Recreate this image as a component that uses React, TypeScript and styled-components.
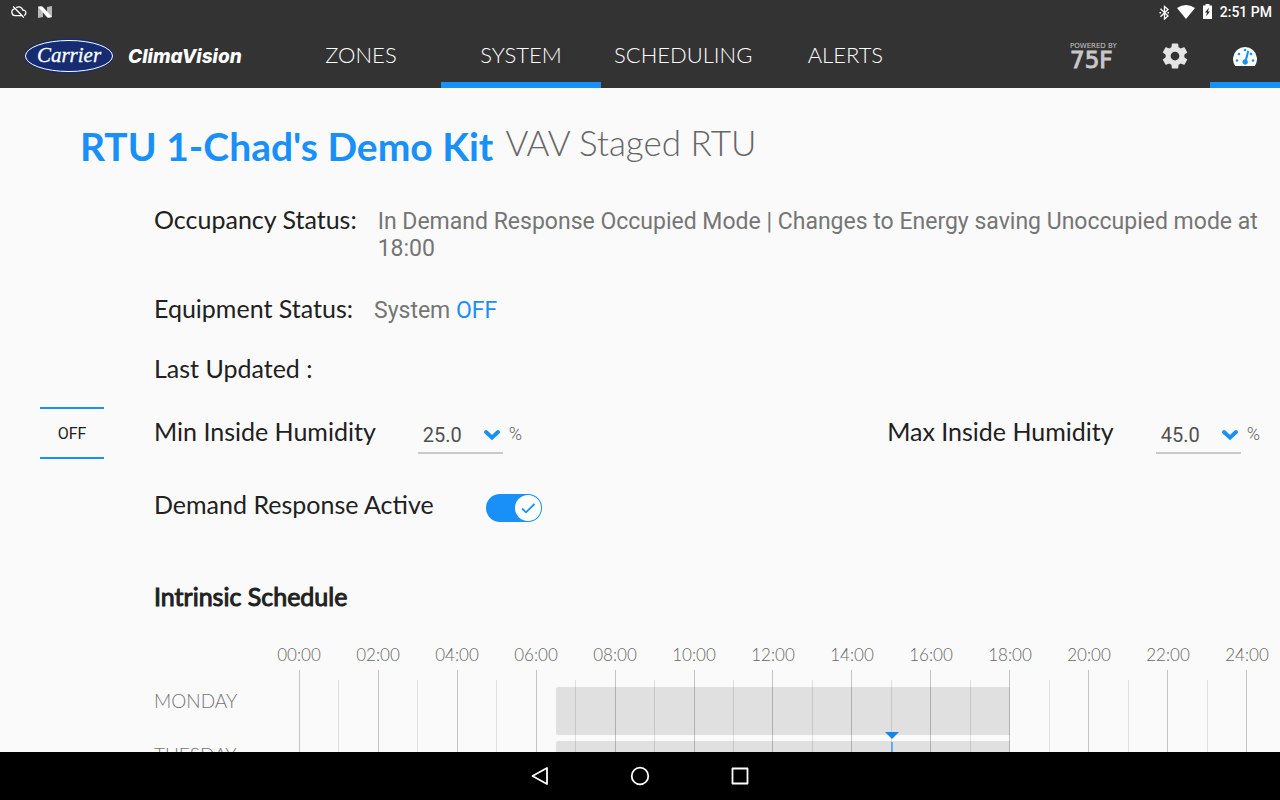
import React from "react";
import styled, { createGlobalStyle } from "styled-components";

const blue = "#1990f8";
const dark = "#333333";
const lato = 'Lato, "Open Sans", sans-serif';
const roboto = 'Roboto, "Noto Sans", sans-serif';

const GlobalStyle = createGlobalStyle`
  *, *::before, *::after { box-sizing: border-box; }
  body { margin: 0; background: #fafafa; font-family: ${lato}; color: #212121; }
  button, select { font: inherit; color: inherit; border: 0; background: none; padding: 0; margin: 0; }
  h1, h2, p { margin: 0; font-weight: 400; }
  svg { display: block; }
`;

const Screen = styled.div`
  display: flex;
  flex-direction: column;
  height: 100vh;
  overflow: hidden;
`;

const StatusBar = styled.div`
  display: flex;
  align-items: center;
  justify-content: space-between;
  height: 24px;
  padding: 0 8px 0 10px;
  background: ${dark};
  color: #fff;
  flex: none;
`;

const StatusGroup = styled.div<{ $gap: number }>`
  display: flex;
  align-items: center;
  gap: ${(p) => p.$gap}px;
`;

const Clock = styled.time`
  font: 500 14px/24px ${roboto};
`;

const Header = styled.header`
  display: flex;
  height: 64px;
  background: ${dark};
  color: #fff;
  flex: none;
`;

const Brand = styled.div`
  display: flex;
  align-items: center;
  gap: 14px;
  width: 281px;
  padding-left: 24px;
`;

const Product = styled.span`
  padding-top: 2px;
  font: italic 800 19px/24px Inter, ${roboto};
  font-feature-settings: "cv11";
`;

const Tabs = styled.nav`
  display: flex;
  flex: 1;
`;

const Tab = styled.button<{ $active?: boolean }>`
  min-width: 160px;
  padding: 4px 13px 0;
  border-bottom: 6px solid ${(p) => (p.$active ? blue : "transparent")};
  font-size: 22px;
  line-height: 28px;
  font-weight: 300;
`;

const Powered = styled.div`
  display: flex;
  flex-direction: column;
  justify-content: center;
  width: 70px;
  color: #c8c8c8;
`;

const PoweredBy = styled.span`
  font: 7px/8px "DejaVu Sans", sans-serif;
`;

const PoweredName = styled.span`
  font: 23px/20px "DejaVu Sans", sans-serif;
  -webkit-text-stroke: 1px currentColor;
`;

const IconTab = styled.button<{ $active?: boolean }>`
  display: flex;
  align-items: center;
  justify-content: center;
  width: 70px;
  padding-top: 6px;
  border-bottom: 6px solid ${(p) => (p.$active ? blue : "transparent")};
`;

const Main = styled.main`
  flex: 1;
  min-height: 0;
  overflow: hidden;
  padding-top: 34px;
`;

const TitleRow = styled.div`
  display: flex;
  gap: 12px;
  padding-left: 80px;
`;

const Title = styled.h1`
  font-size: 39px;
  line-height: 48px;
  font-weight: 700;
  color: ${blue};
`;

const Subtitle = styled.p`
  font-size: 35px;
  line-height: 40px;
  font-weight: 300;
  color: #666;
`;

const Row = styled.section<{ $top: number }>`
  display: grid;
  grid-template-columns: 114px 1fr;
  padding: 0 20px 0 40px;
  margin-top: ${(p) => p.$top}px;
`;

const RowBody = styled.div`
  grid-column: 2;
  display: flex;
  gap: 21px;
  margin-right: -12px;
`;

const Label = styled.span`
  font-size: 25px;
  line-height: 32px;
  white-space: nowrap;
`;

const Value = styled.p`
  padding-top: 5px;
  font: 23px/27px ${roboto};
  color: #757575;
`;

const Accent = styled.span`
  color: ${blue};
`;

const HumidityRow = styled(Row)`
  align-items: center;
`;

const ProfilePicker = styled.select`
  appearance: none;
  width: 64px;
  height: 52px;
  padding-top: 2px;
  border-top: 2px solid ${blue};
  border-bottom: 2px solid ${blue};
  font: 16px/20px ${roboto};
  text-align: center;
  text-align-last: center;
`;

const HumidityFields = styled.div`
  display: flex;
  justify-content: space-between;
`;

const Field = styled.label`
  display: flex;
  gap: 42px;
  padding-top: 2px;
`;

const FieldControl = styled.span`
  display: flex;
  gap: 6px;
`;

const SelectBox = styled.span`
  display: grid;
  grid-template-columns: 1fr 20px;
  align-items: center;
  width: 85px;
  height: 39px;
  border-bottom: 2px solid #c9c9c9;

  svg { grid-area: 1 / 2; pointer-events: none; margin-top: 3px; }
`;

const Select = styled.select`
  grid-area: 1 / 1 / 2 / 3;
  appearance: none;
  width: 100%;
  height: 37px;
  padding: 3px 5px 0;
  font: 20px/24px ${roboto};
  color: #505050;
`;

const Unit = styled.span`
  font: 300 18px/38px ${roboto};
  color: #666;
`;

const Toggle = styled.label`
  display: flex;
  gap: 52px;
`;

const Switch = styled.span`
  display: grid;
  margin-top: 6px;

  input { grid-area: 1 / 1; width: 56px; height: 28px; margin: 0; opacity: 0; }
  svg { grid-area: 1 / 1; }
`;

const SectionTitle = styled.h2`
  padding-left: 154px;
  margin-top: 58px;
  font-size: 25px;
  line-height: 32px;
  -webkit-text-stroke: 1px currentColor;
`;

const Schedule = styled.div`
  display: grid;
  grid-template-columns: 145px 1fr;
  padding: 33px 33px 0 154px;
`;

const HourLabels = styled.div`
  grid-column: 2;
  display: grid;
  grid-template-columns: repeat(12, 1fr) 0;
  height: 25px;
`;

const HourLabel = styled.span`
  display: flex;
  justify-content: center;
  width: 0;
  font-size: 17px;
  line-height: 20px;
  font-weight: 300;
  color: #666;
`;

const Days = styled.div`
  padding-top: 17px;
`;

const Day = styled.div`
  height: 54px;
  font-size: 19px;
  line-height: 28px;
  font-weight: 300;
  color: #757575;
`;

const Chart = styled.div`
  display: grid;
`;

const HourLines = styled.div`
  grid-area: 1 / 1;
  display: grid;
  grid-template-columns: repeat(24, 1fr) 1px;
  z-index: 1;
`;

const HourLine = styled.i<{ $major: boolean }>`
  width: 1px;
  margin-top: ${(p) => (p.$major ? 0 : 10)}px;
  background: rgba(0, 0, 0, ${(p) => (p.$major ? 0.22 : 0.11)});
`;

const DayTracks = styled.div`
  grid-area: 1 / 1;
  display: flex;
  flex-direction: column;
  gap: 6px;
  padding-top: 17px;
`;

const Track = styled.div`
  position: relative;
  display: grid;
  grid-template-columns: repeat(48, 1fr);
  height: 48px;
`;

const Occupied = styled.div`
  grid-area: 1 / 14 / 2 / 37;
  border-radius: 2px 0 0 2px;
  background: #e0e0e0;
`;

const NowMarker = styled.div`
  position: absolute;
  top: -9px;
  left: 62.5%;
  width: 14px;
  margin-left: -7px;
  z-index: 2;
`;

const NavBar = styled.footer`
  display: flex;
  align-items: center;
  justify-content: center;
  gap: 76px;
  height: 48px;
  background: #000;
  flex: none;
`;

const hours = Array.from({ length: 25 }, (_, h) => h);
const days = ["MONDAY", "TUESDAY"];

function CarrierLogo() {
  return (
    <svg width="90" height="36" viewBox="0 0 90 36" role="img" aria-label="Carrier">
      <ellipse cx="45" cy="18" rx="44.5" ry="17.5" fill="#152c73" />
      <ellipse cx="45" cy="18" rx="43.5" ry="15.5" fill="none" stroke="#fff" strokeWidth="1" />
      <text x="45" y="24" fill="#fff" stroke="#fff" strokeWidth="0.3" textAnchor="middle" fontFamily="Liberation Serif, serif" fontStyle="italic" fontSize="21">
        Carrier
      </text>
    </svg>
  );
}

function Chevron() {
  return (
    <svg width="18" height="12" viewBox="0 0 18 12" fill="none" stroke={blue} strokeWidth="4" strokeLinecap="round" strokeLinejoin="miter">
      <path d="M3 3 L9 8.6 L15 3" />
    </svg>
  );
}

function HumidityField({ label, value }: { label: string; value: string }) {
  return (
    <Field>
      <Label>{label}</Label>
      <FieldControl>
        <SelectBox>
          <Select defaultValue={value}>
            <option>{value}</option>
          </Select>
          <Chevron />
        </SelectBox>
        <Unit>%</Unit>
      </FieldControl>
    </Field>
  );
}

export default function App() {
  return (
    <Screen>
      <GlobalStyle />
      <StatusBar>
        <StatusGroup $gap={10}>
          <svg width="18" height="14" viewBox="0 0 18 14" fill="none" stroke="#fff" strokeWidth="1.3">
            <path d="M6.2 2.6 C9 .8 12 2.3 12.8 5 C15.500 5 16.300 7 15.700 8.800 C15.400 9.700 14.800 10.200 14 10.500 M4.800 3.800 C2.500 4.100 1.600 5.800 1.900 7.600 C2.200 9.600 3.500 10.600 5 10.600 H11.500 M3.200 1.500 L13.800 12.500" />
          </svg>
          <svg width="14" height="12" viewBox="0 0 14 12">
            <path d="M0 .5 L5 4 V11 L0 12 Z M14 0 L9 1 V8 L14 11 Z" fill="#b8b8b8" />
            <path d="M0 .8 Q2 -.3 4.500 .5 L14 11 Q11 12.500 9 11.300 Z" fill="#fff" />
          </svg>
        </StatusGroup>
        <StatusGroup $gap={8}>
          <svg width="10" height="15" viewBox="0 0 10 15" fill="none" stroke="#fff" strokeWidth="1.3">
            <path d="M1.500 3.700 L9 11 L5.500 14 V1.500 L9 4.500 L1.500 11.700" />
            <path d="M.5 7.700 h1.600 M8.400 7.700 h1.600" strokeWidth="1.600" />
          </svg>
          <svg width="18" height="14" viewBox="0 0 18 14">
            <path d="M0 3 Q9 -3 18 3 L9 14 Z" fill="#fff" />
          </svg>
          <svg width="9" height="17" viewBox="0 0 9 17">
            <path d="M0 1.500 H2.500 V0 H6.500 V1.500 H9 V15 H0 Z" fill="#fff" />
            <path d="M6 3.500 L2 8.500 H4 L3 12.500 L7 7.500 H5 Z" fill={dark} />
          </svg>
          <Clock>2:51 PM</Clock>
        </StatusGroup>
      </StatusBar>

      <Header>
        <Brand>
          <CarrierLogo />
          <Product>ClimaVision</Product>
        </Brand>
        <Tabs>
          <Tab>ZONES</Tab>
          <Tab $active>SYSTEM</Tab>
          <Tab>SCHEDULING</Tab>
          <Tab>ALERTS</Tab>
        </Tabs>
        <Powered>
          <PoweredBy>POWERED BY</PoweredBy>
          <PoweredName>75F</PoweredName>
        </Powered>
        <IconTab aria-label="Settings">
          <svg width="30" height="30" viewBox="0 0 24 24" fill="#e4e4e4">
            <path d="M19.430 12.980c.040-.320.070-.640.070-.980s-.030-.660-.070-.980l2.110-1.650c.190-.150.240-.420.120-.640l-2-3.460c-.120-.220-.390-.300-.610-.220l-2.490 1c-.520-.400-1.080-.730-1.690-.980l-.380-2.650C14.460 2.180 14.250 2 14 2h-4c-.250 0-.460.180-.490.420l-.380 2.650c-.610.250-1.170.590-1.690.980l-2.490-1c-.230-.090-.490 0-.610.220l-2 3.460c-.130.220-.070.490.120.640l2.110 1.650c-.040.320-.070.650-.070.980s.030.660.070.980l-2.110 1.650c-.190.150-.240.420-.120.640l2 3.460c.120.220.390.300.610.220l2.490-1c.520.400 1.080.730 1.690.980l.380 2.650c.030.240.240.420.490.420h4c.250 0 .460-.180.490-.420l.380-2.650c.610-.250 1.170-.590 1.690-.980l2.490 1c.230.090.490 0 .610-.220l2-3.460c.120-.220.070-.490-.120-.640l-2.110-1.650zM12 15.500c-1.930 0-3.500-1.570-3.500-3.500s1.570-3.500 3.500-3.500 3.500 1.570 3.500 3.500-1.570 3.500-3.500 3.500z" />
          </svg>
        </IconTab>
        <IconTab $active aria-label="Dashboard">
          <svg width="24" height="20" viewBox="0 0 24 20">
            <path d="M2.200 20 A12 12 0 1 1 21.800 20 Z" fill="#fff" />
            <g fill={blue}>
              <circle cx="4" cy="14.500" r="1.300" />
              <circle cx="6" cy="8" r="1.300" />
              <circle cx="12" cy="4" r="1.300" />
              <circle cx="18" cy="8" r="1.300" />
              <circle cx="20" cy="14.500" r="1.300" />
              <path d="M14.300 4.600 L16.200 5.200 L14 14 A2.700 2.700 0 1 1 12 13.300 Z" />
            </g>
          </svg>
        </IconTab>
      </Header>

      <Main>
        <TitleRow>
          <Title>RTU 1-Chad's Demo Kit</Title>
          <Subtitle>VAV Staged RTU</Subtitle>
        </TitleRow>

        <Row $top={33}>
          <RowBody>
            <Label>Occupancy Status:</Label>
            <Value>In Demand Response Occupied Mode | Changes to Energy saving Unoccupied mode at 18:00</Value>
          </RowBody>
        </Row>
        <Row $top={30}>
          <RowBody>
            <Label>Equipment Status:</Label>
            <Value>
              System <Accent>OFF</Accent>
            </Value>
          </RowBody>
        </Row>
        <Row $top={28}>
          <RowBody>
            <Label>Last Updated :</Label>
          </RowBody>
        </Row>
        <HumidityRow $top={23}>
          <ProfilePicker aria-label="System profile" defaultValue="OFF">
            <option>OFF</option>
          </ProfilePicker>
          <HumidityFields>
            <HumidityField label="Min Inside Humidity" value="25.0" />
            <HumidityField label="Max Inside Humidity" value="45.0" />
          </HumidityFields>
        </HumidityRow>
        <Row $top={29}>
          <RowBody>
            <Toggle>
              <Label>Demand Response Active</Label>
              <Switch>
                <input type="checkbox" role="switch" defaultChecked />
                <svg width="56" height="28" viewBox="0 0 56 28">
                  <rect width="56" height="28" rx="14" fill={blue} />
                  <circle cx="42" cy="14" r="13" fill="#fff" />
                  <path d="M36 14.500 L40 18.300 L48.500 10" fill="none" stroke={blue} strokeWidth="1.800" />
                </svg>
              </Switch>
            </Toggle>
          </RowBody>
        </Row>

        <SectionTitle>Intrinsic Schedule</SectionTitle>
        <Schedule>
          <HourLabels>
            {hours
              .filter((h) => h % 2 === 0)
              .map((h) => (
                <HourLabel key={h}>{String(h).padStart(2, "0")}:00</HourLabel>
              ))}
          </HourLabels>
          <Days>
            {days.map((d) => (
              <Day key={d}>{d}</Day>
            ))}
          </Days>
          <Chart>
            <HourLines>
              {hours.map((h) => (
                <HourLine key={h} $major={h % 2 === 0} />
              ))}
            </HourLines>
            <DayTracks>
              {days.map((d) => (
                <Track key={d}>
                  <Occupied />
                  {d === "TUESDAY" && (
                    <NowMarker>
                      <svg width="14" height="57" viewBox="0 0 14 57">
                        <path d="M0 0 H14 L7 7 Z" fill="#1585e6" />
                        <rect x="6" y="10" width="2" height="47" fill={blue} opacity="0.6" />
                      </svg>
                    </NowMarker>
                  )}
                </Track>
              ))}
            </DayTracks>
          </Chart>
        </Schedule>
      </Main>

      <NavBar>
        <button aria-label="Back">
          <svg width="24" height="24" viewBox="0 0 24 24" fill="none" stroke="#fff" strokeWidth="1.800" strokeLinejoin="round">
            <path d="M19 4 V20 L4.500 12 Z" />
          </svg>
        </button>
        <button aria-label="Home">
          <svg width="24" height="24" viewBox="0 0 24 24" fill="none" stroke="#fff" strokeWidth="1.800">
            <circle cx="12" cy="12" r="8.300" />
          </svg>
        </button>
        <button aria-label="Recent apps">
          <svg width="24" height="24" viewBox="0 0 24 24" fill="none" stroke="#fff" strokeWidth="1.800" strokeLinejoin="round">
            <rect x="4.500" y="4.500" width="15" height="15" />
          </svg>
        </button>
      </NavBar>
    </Screen>
  );
}
